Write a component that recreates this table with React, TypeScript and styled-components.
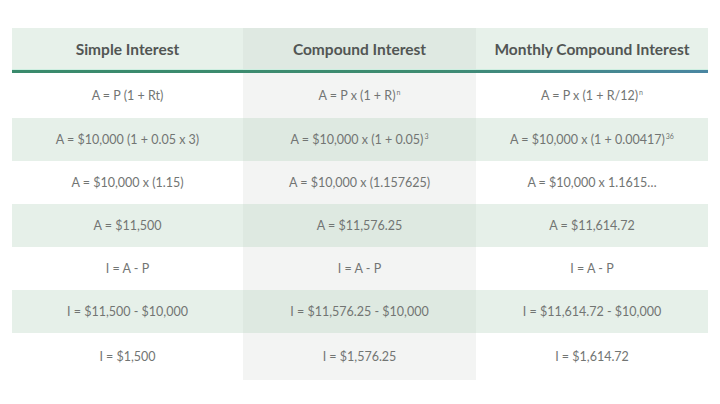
import React from 'react';
import styled, { createGlobalStyle } from 'styled-components';

type Band = 'head' | 'white' | 'green';

// superscript exponent, defined first because ROWS uses it at load time
const Sup = styled.sup`
  font-size: 7px;
  line-height: 0;
  margin-left: 1px;
  vertical-align: 5px;
`;

const ROWS: React.ReactNode[][] = [
  [
    'A = P (1 + Rt)',
    <>A = P x (1 + R)<Sup>n</Sup></>,
    <>A = P x (1 + R/12)<Sup>n</Sup></>,
  ],
  [
    'A = $10,000 (1 + 0.05 x 3)',
    <>A = $10,000 x (1 + 0.05)<Sup>3</Sup></>,
    <>A = $10,000 x (1 + 0.00417)<Sup>36</Sup></>,
  ],
  ['A = $10,000 x (1.15)', 'A = $10,000 x (1.157625)', 'A = $10,000 x 1.1615…'],
  ['A = $11,500', 'A = $11,576.25', 'A = $11,614.72'],
  ['I = A - P', 'I = A - P', 'I = A - P'],
  ['I = $11,500 - $10,000', 'I = $11,576.25 - $10,000', 'I = $11,614.72 - $10,000'],
  ['I = $1,500', 'I = $1,576.25', 'I = $1,614.72'],
];

const HEADERS = ['Simple Interest', 'Compound Interest', 'Monthly Compound Interest'];

const ROW_HEIGHTS = [45, 43, 43, 43, 43, 43, 47];

const App: React.FC = () => (
  <>
    <GlobalStyle />
    <Page>
      <Table>
        {HEADERS.map((h, i) => (
          <HeadCell key={h} $mid={i === 1}>
            {h}
          </HeadCell>
        ))}
        <Divider />
        {ROWS.map((row, r) =>
          row.map((cell, c) => (
            <Cell
              key={`${r}-${c}`}
              $band={r % 2 === 1 ? 'green' : 'white'}
              $mid={c === 1}
              $height={ROW_HEIGHTS[r]}
            >
              <CellText>{cell}</CellText>
            </Cell>
          ))
        )}
      </Table>
    </Page>
  </>
);

const GlobalStyle = createGlobalStyle`
  html, body {
    margin: 0;
    padding: 0;
    background: #ffffff;
  }
  body {
    font-family: Lato, "Open Sans", "Liberation Sans", sans-serif;
  }
`;

const Page = styled.div`
  width: 720px;
  height: 404px;
  padding: 28px 12px 0;
  box-sizing: border-box;
  overflow: hidden;
`;

const Table = styled.div`
  display: grid;
  grid-template-columns: 231px 233px 232px;
  width: 696px;
`;

const bg = (band: Band, mid: boolean) => {
  if (band === 'head') return mid ? '#dfe9e2' : '#e7f1ea';
  if (band === 'green') return mid ? '#dee9e1' : '#e6f0e9';
  return mid ? '#f3f4f3' : '#ffffff';
};

const HeadCell = styled.div<{ $mid: boolean }>`
  height: 42px;
  display: flex;
  align-items: center;
  justify-content: center;
  background: ${(p) => bg('head', p.$mid)};
  color: #525654;
  font-size: 15.5px;
  font-weight: 700;
`;

const Divider = styled.div`
  grid-column: 1 / -1;
  height: 3px;
  background: linear-gradient(90deg, #3a8a6c 0%, #3d8b70 60%, #4a86a2 100%);
  box-shadow: 0 -1px 0 #cdeee0, 0 1px 0 #d6f2e8;
`;

const Cell = styled.div<{ $band: Band; $mid: boolean; $height: number }>`
  height: ${(p) => p.$height}px;
  display: flex;
  align-items: center;
  justify-content: center;
  background: ${(p) => bg(p.$band, p.$mid)};
  color: #727573;
  font-size: 12.5px;
  white-space: nowrap;
`;

const CellText = styled.span`
  display: block;
`;

export default App;
